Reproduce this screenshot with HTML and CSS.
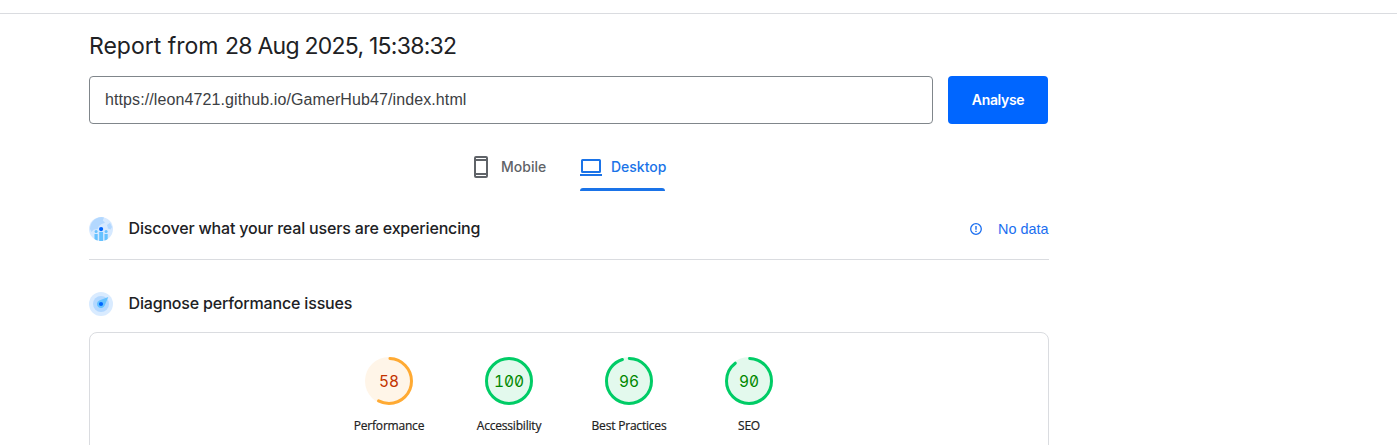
FILE: index.html
```html
<!DOCTYPE html>
<html lang="en">
<head>
<meta charset="utf-8">
<title>PageSpeed Insights</title>
<link rel="stylesheet" href="styles.css">
</head>
<body>
<header class="topbar"></header>
<main class="page">
  <h1 class="title"><span class="lead">Report from </span><span>28 Aug 2025, 15:38:32</span></h1>
  <div class="search">
    <div class="url">https://leon4721.github.io/GamerHub47/index.html</div>
    <button class="analyse">Analyse</button>
  </div>
  <nav class="tabs">
    <div class="tab">
      <svg width="24" height="24" viewBox="0 0 24 24"><path fill="currentColor" fill-rule="evenodd" d="M7 0h10a2 2 0 0 1 2 2v18a2 2 0 0 1-2 2H7a2 2 0 0 1-2-2V2a2 2 0 0 1 2-2zm0 2v1h10V2zm0 3v12h10V5zm0 14v1h10v-1z"/></svg>
      <span class="mobile">Mobile</span>
    </div>
    <div class="tab active">
      <svg width="22" height="24" viewBox="0 0 22 24"><path fill="currentColor" fill-rule="evenodd" d="M2.500 3h17a1.500 1.500 0 0 1 1.500 1.500v11a1.500 1.500 0 0 1-1.500 1.500h-17A1.500 1.500 0 0 1 1 15.500v-11A1.500 1.500 0 0 1 2.500 3zM3 5v10h16V5zM0 18h22v2H0z"/></svg>
      <span class="desktop">Desktop</span>
    </div>
  </nav>
  <section class="heading ruled">
    <svg width="24" height="24" viewBox="0 0 24 24">
      <circle cx="12" cy="12" r="12" fill="#d6e9ff"/>
      <path fill="#b3d8ff" d="M1 12A11.500 11.500 0 0 1 15 .4l-1.200 3.100 2.200 2.200-3.800 1.600-2.400 2-1 2.700-4.300.8-2 2.200zM18 8l3-2.200 2 4.200-1.500 2.500-2.500-1z"/>
      <path fill="#66c2ff" d="M5.500 17h3.200v6.500a12 12 0 0 1-3.200-1.600zM10.200 15h3.900v9h-3.900zM15.500 17h3.200v4.900a12 12 0 0 1-3.200 1.600z"/>
      <circle cx="7.100" cy="14.500" r="1.500" fill="#66c2ff"/><circle cx="17.100" cy="14.500" r="1.500" fill="#66c2ff"/>
      <circle cx="12.100" cy="12.100" r="2.100" fill="#06f"/>
    </svg>
    <h2 class="discover">Discover what your real users are experiencing</h2>
    <div class="nodata">
      <svg width="12" height="12" viewBox="0 0 12 12" fill="none" stroke="currentColor"><circle cx="6" cy="6" r="5.300" stroke-width="1.300"/><path stroke-width="1.400" d="M6 3v3.700M6 7.800v1.300"/></svg>
      <span>No data</span>
    </div>
  </section>
  <section class="heading diagnose-row">
    <svg width="24" height="24" viewBox="0 0 24 24">
      <circle cx="12" cy="12" r="12" fill="#d9ebff"/>
      <circle cx="12" cy="12" r="8" fill="#b3d8ff"/>
      <path fill="#66c2ff" d="M19.300 4.900 15.700 13.500A4 4 0 1 1 10.200 8.500z"/>
      <circle cx="12" cy="12" r="2.100" fill="#06f"/>
    </svg>
    <h2 class="diagnose">Diagnose performance issues</h2>
  </section>
  <section class="card">
    <div class="gauge average">
      <div class="dial"><svg width="48" height="48" viewBox="0 0 48 48"><circle class="base" cx="24" cy="24" r="24"/><circle class="arc" cx="24" cy="24" r="22.500" pathLength="100" stroke-dasharray="57 100" stroke-dashoffset="-.7"/></svg><span class="score">58</span></div>
      <span class="label">Performance</span>
    </div>
    <div class="gauge">
      <div class="dial"><svg width="48" height="48" viewBox="0 0 48 48"><circle class="base" cx="24" cy="24" r="24"/><circle class="arc" cx="24" cy="24" r="22.500"/></svg><span class="score">100</span></div>
      <span class="label">Accessibility</span>
    </div>
    <div class="gauge">
      <div class="dial"><svg width="48" height="48" viewBox="0 0 48 48"><circle class="base" cx="24" cy="24" r="24"/><circle class="arc" cx="24" cy="24" r="22.500" pathLength="100" stroke-dasharray="95 100" stroke-dashoffset="-.2"/></svg><span class="score">96</span></div>
      <span class="label">Best Practices</span>
    </div>
    <div class="gauge">
      <div class="dial"><svg width="48" height="48" viewBox="0 0 48 48"><circle class="base" cx="24" cy="24" r="24"/><circle class="arc" cx="24" cy="24" r="22.500" pathLength="100" stroke-dasharray="89 100" stroke-dashoffset="-.5"/></svg><span class="score">90</span></div>
      <span class="label">SEO</span>
    </div>
  </section>
</main>
</body>
</html>
```

FILE: styles.css
```css
* { box-sizing: border-box; }
body { margin: 0; height: 445px; overflow: hidden; background: #fff; color: #202124; font-family: "Liberation Sans", sans-serif; }
svg { display: block; flex: none; }
.topbar { height: 14px; border-bottom: 1px solid #dadce0; }
.page { width: 960px; margin-left: 89px; }
.title { margin: 0; padding-top: 16px; height: 62px; font: 400 23px/32px Inter, sans-serif; letter-spacing: -0.75px; white-space: nowrap; }
.lead { letter-spacing: 0; }
.search { display: flex; gap: 15px; }
.url { width: 844px; height: 48px; padding-left: 15px; border: 1px solid #80868b; border-radius: 4px; font-size: 16px; line-height: 46px; letter-spacing: 0.1px; color: #3c4043; }
.analyse { width: 100px; height: 48px; padding: 0; border: 0; border-radius: 4px; background: #06f; color: #fff; font: 600 14px/48px Inter, sans-serif; letter-spacing: -0.35px; }
.tabs { display: flex; gap: 33px; height: 67px; padding: 26px 0 0 380px; }
.tab { display: flex; align-items: center; height: 41px; padding: 5px 0 12px; color: #5f6368; font: 500 14px/24px Inter, sans-serif; white-space: nowrap; }
.tab svg { margin-top: 1px; }
.tab span { margin-left: 8px; }
.mobile { width: 46px; }
.active { position: relative; color: #1a73e8; }
.active span { margin-left: 9px; }
.active::after { content: ""; position: absolute; left: 0; bottom: 0; width: 85px; height: 3px; border-radius: 3px 3px 0 0; background: #1a73e8; }
.heading { display: flex; align-items: center; }
.ruled { height: 69px; padding: 7px 0 0; border-bottom: 1px solid #dadce0; }
.diagnose-row { height: 72px; padding-top: 16px; }
.heading h2 { margin: 0 0 2px 15.500px; font: 500 16px/24px Inter, sans-serif; letter-spacing: -0.17px; white-space: nowrap; }
.nodata { display: flex; align-items: center; gap: 16px; margin: 0 .5px 0 auto; color: #1a6ef0; font-size: 14.400px; line-height: 24px; }
.card { display: flex; justify-content: center; height: 130px; padding-top: 24px; border: 1px solid #dadce0; border-radius: 8px; }
.gauge { --ring: #0c6; --tint: #e3f9ed; --ink: #080; width: 120px; display: flex; flex-direction: column; align-items: center; }
.average { --ring: #fa3; --tint: #fff5e8; --ink: #c33300; }
.dial { display: grid; place-items: center; width: 48px; height: 48px; }
.dial > * { grid-area: 1 / 1; }
.base { fill: var(--tint); }
.arc { fill: none; stroke: var(--ring); stroke-width: 3; stroke-linecap: round; transform: rotate(-90deg); transform-origin: center; }
.score { padding-top: 2px; color: var(--ink); font: 400 15.500px/20px Inter, sans-serif; font-feature-settings: "zero", "tnum"; }
.label { margin-top: 13px; font: 500 12px/16px "Open Sans", sans-serif; letter-spacing: -0.2px; -webkit-text-stroke: 0.2px currentColor; color: #212121; white-space: nowrap; }
```
